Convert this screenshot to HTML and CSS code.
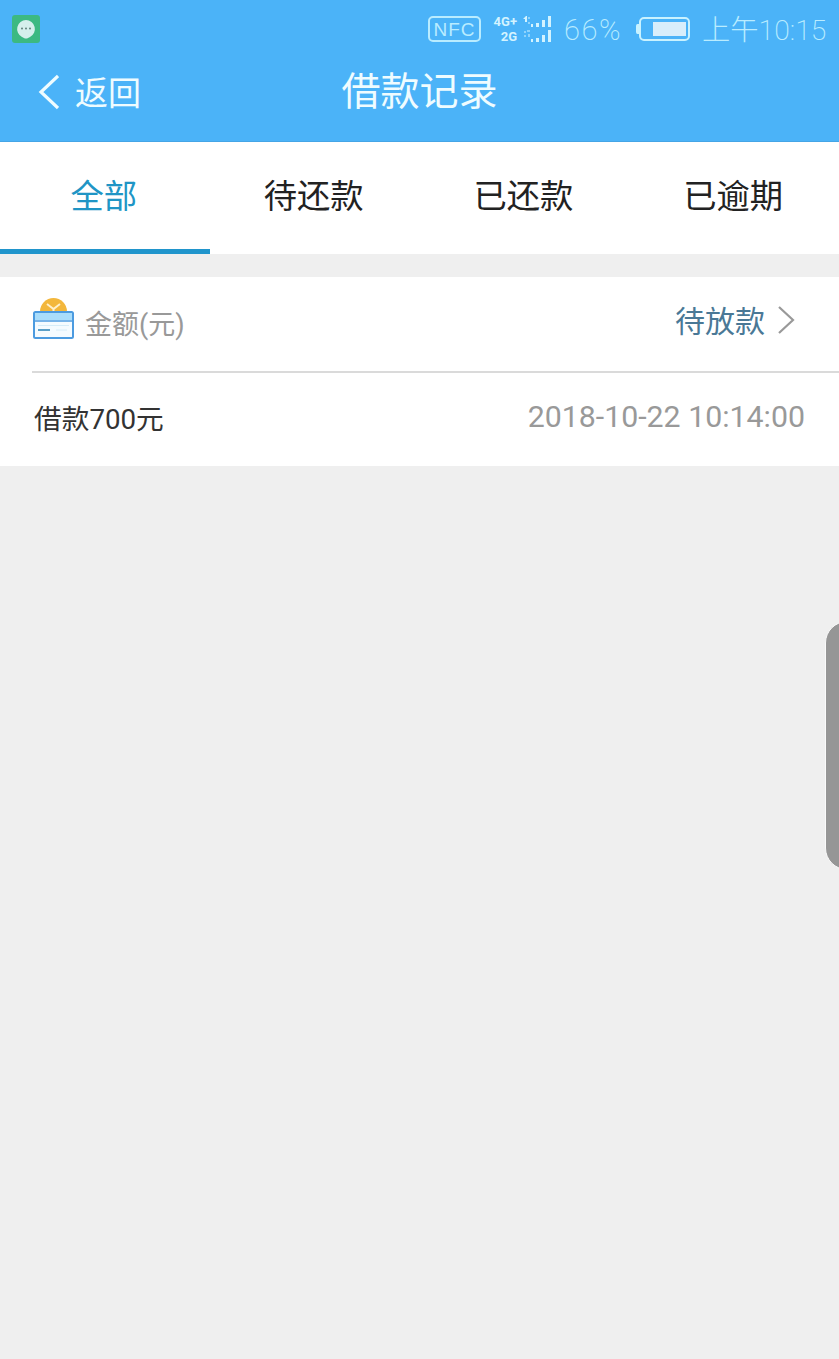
FILE: index.html
```html
<!DOCTYPE html>
<html lang="zh-CN">
<head>
  <meta charset="UTF-8">
  <meta name="viewport" content="width=device-width, initial-scale=1.0">
  <title>借款记录</title>
  <link rel="stylesheet" href="styles.css">
</head>
<body>
  <header class="header">
    <div class="status-bar">
      <svg class="app-icon" width="28" height="28" viewBox="0 0 28 28">
        <rect width="28" height="28" rx="3" fill="#3cb982"/>
        <path d="M14 5a9 9 0 0 1 4 17l-3 1.500h-2L10 22A9 9 0 0 1 14 5z" fill="#d5efec"/>
        <g fill="#55766f">
          <circle cx="10" cy="13.500" r="0.900"/>
          <circle cx="14" cy="13.500" r="0.900"/>
          <circle cx="18" cy="13.500" r="0.900"/>
        </g>
      </svg>
      <div class="status-right">
        <span class="nfc">NFC</span>
        <div class="network">
          <span>4G+</span>
          <span>2G</span>
        </div>
        <svg class="signal" width="30" height="28" viewBox="0 0 30 28" fill="#d3f3ff">
          <path d="M0 4l3-3h1v6H2V4z"/>
          <path d="M5 2h2v2H5zM5 7h2v2H5z" opacity="0.5"/>
          <path d="M8 9h2v3H8zM13 8h3v4h-3zM19 5h3v7h-3zM25 1h3v11h-3z"/>
          <path d="M1 16h2v2H1zM4 15h3v2H4zM1 20h2v2H1zM5 19h2v3H5z" opacity="0.5"/>
          <path d="M8 24h2v3H8zM13 23h3v4h-3zM19 20h3v7h-3zM25 15h3v12h-3z"/>
        </svg>
        <span class="percent">66%</span>
        <svg class="battery" width="55" height="24" viewBox="0 0 55 24">
          <rect x="4" y="1" width="49" height="22" rx="4" fill="none" stroke="#c9f2ff" stroke-width="2"/>
          <path d="M3 7H1.500Q0 7 0 9v6q0 2 1.500 2H3z" fill="#c9f2ff"/>
          <rect x="17" y="5" width="33" height="14" fill="#d8eefb"/>
        </svg>
        <span class="time">上午10:15</span>
      </div>
    </div>
    <div class="nav-bar">
      <a class="back" href="#">
        <svg width="22" height="36" viewBox="0 0 22 36" fill="none" stroke="#effcff" stroke-width="3.200">
          <path d="M21 2L4 18l17 16"/>
        </svg>
        <span>返回</span>
      </a>
      <h1 class="title">借款记录</h1>
    </div>
  </header>

  <nav class="tabs">
    <a class="tab active" href="#">全部</a>
    <a class="tab" href="#">待还款</a>
    <a class="tab" href="#">已还款</a>
    <a class="tab" href="#">已逾期</a>
  </nav>

  <main class="record">
    <div class="record-head">
      <svg class="card-icon" width="42" height="44" viewBox="0 0 42 44">
        <circle cx="21.500" cy="14.500" r="13.500" fill="#f3b73c"/>
        <path d="M15 7l6.500 5L28 7M21.500 11v5" fill="none" stroke="#fff0cc" stroke-width="2"/>
        <rect x="2" y="15" width="39" height="26" rx="1.500" fill="#f5fbff" stroke="#4c9be0" stroke-width="2"/>
        <path d="M3 16h37v7H3z" fill="#a9ddfb"/>
        <path d="M3 24h37" stroke="#4c9be0" stroke-width="1.500"/>
        <path d="M6 28.500h31" stroke="#d6ecf8" stroke-width="1"/>
        <path d="M6 33h12" stroke="#5a9fc8" stroke-width="2"/>
        <path d="M24 33h11" stroke="#d6ecf8" stroke-width="1"/>
      </svg>
      <span class="label">金额(元)</span>
      <span class="status">待放款</span>
      <svg class="arrow" width="18" height="30" viewBox="0 0 18 30" fill="none" stroke="#999" stroke-width="2.200">
        <path d="M2 2l14 13L2 28"/>
      </svg>
    </div>
    <div class="record-body">
      <span class="name">借款700元</span>
      <span class="date">2018-10-22 10:14:00</span>
    </div>
  </main>

  <div class="side-handle"></div>
</body>
</html>
```
FILE: styles.css
```css
* {
  margin: 0;
  padding: 0;
  box-sizing: border-box;
}

body {
  min-height: 100vh;
  background-color: #efefef;
  font-family: Roboto, "Noto Sans CJK SC", sans-serif;
  overflow: hidden;
}

a {
  color: inherit;
  text-decoration: none;
}

svg {
  display: block;
  flex-shrink: 0;
}

.header {
  height: 142px;
  background-color: #4bb3f8;
  border-bottom: 1px solid #45a5e6;
  color: #effcff;
}

.status-bar {
  display: flex;
  justify-content: space-between;
  align-items: center;
  height: 58px;
  padding: 0 12px;
}

.status-right {
  display: flex;
  align-items: center;
  color: #b9ecff;
  white-space: nowrap;
}

.nfc {
  width: 53px;
  height: 26px;
  margin-right: 12px;
  border: 2px solid #b9ecff;
  border-radius: 5px;
  font-family: "Liberation Sans", sans-serif;
  font-size: 19px;
  line-height: 23px;
  letter-spacing: 1px;
  text-align: center;
}

.network {
  display: flex;
  flex-direction: column;
  width: 24px;
  margin-right: 6px;
  font-size: 13px;
  font-weight: 700;
  line-height: 15px;
  text-align: right;
  color: #d3f3ff;
}

.signal {
  margin-right: 11px;
}

.percent,
.time {
  font-size: 29px;
  font-weight: 200;
  line-height: 34px;
}

.percent {
  width: 60px;
  margin-right: 12px;
  padding-top: 1px;
  letter-spacing: 1.5px;
}

.battery {
  margin-right: 11px;
}

.time {
  width: 125px;
  padding-top: 3px;
  font-size: 28.3px;
}

.nav-bar {
  display: grid;
  grid-template-columns: 1fr auto 1fr;
  align-items: center;
  height: 66px;
  padding: 2px 37px 0;
}

.back {
  display: flex;
  align-items: center;
  gap: 16px;
  padding-top: 3px;
  font-size: 33px;
  line-height: 40px;
}

.back svg {
  margin-top: -3px;
}

.title {
  font-size: 39px;
  font-weight: 400;
  line-height: 48px;
}

.tabs {
  display: grid;
  grid-template-columns: repeat(4, 1fr);
  height: 112px;
  margin-bottom: 23px;
  background-color: #fff;
}

.tab {
  height: 112px;
  padding-right: 2px;
  border-bottom: 5px solid transparent;
  color: #222;
  font-size: 33.3px;
  line-height: 109px;
  text-align: center;
}

.tab.active {
  border-bottom-color: #2095cc;
  color: #2095c5;
}

.record {
  height: 189px;
  background-color: #fff;
}

.record-head {
  display: flex;
  align-items: center;
  height: 96px;
  margin-left: 32px;
  padding: 0 44px 8px 0;
  border-bottom: 2px solid #dadada;
}

.card-icon {
  margin-top: -2px;
}

.label {
  margin: 5px auto 0 11px;
  color: #999;
  font-size: 27px;
}

.status {
  margin: -3px 12px 0 0;
  color: #4a7896;
  font-size: 30px;
}

.record-body {
  display: flex;
  justify-content: space-between;
  align-items: center;
  height: 93px;
  padding: 0 34px;
}

.name {
  margin-bottom: 5px;
  color: #333;
  font-size: 27.7px;
}

.date {
  margin-bottom: 7px;
  color: #999;
  font-size: 30.3px;
}

/* floating edge panel handle */
.side-handle {
  position: absolute;
  top: 621px;
  right: -31px;
  width: 45px;
  height: 249px;
  border: 1px solid #fafafa;
  border-radius: 22px;
  background-color: #969696;
}
```
